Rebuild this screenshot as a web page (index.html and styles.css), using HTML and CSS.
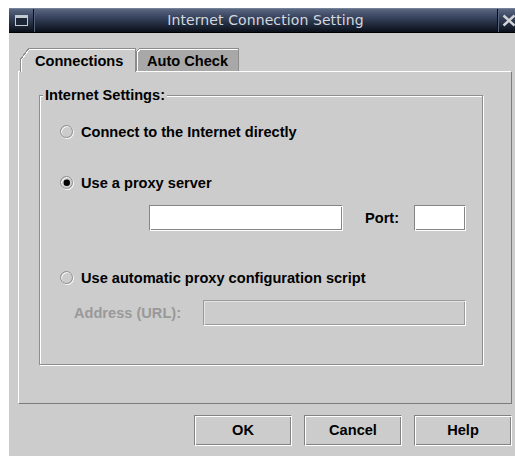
FILE: index.html
```html
<!DOCTYPE html>
<html lang="en">
<head>
<meta charset="utf-8">
<title>Internet Connection Setting</title>
<link rel="stylesheet" href="styles.css">
</head>
<body>
<div class="window">
  <div class="titlebar">
    <div class="tb-menu">
      <svg width="13" height="11" viewBox="0 0 13 11" aria-hidden="true">
        <rect x="0.5" y="0.5" width="12" height="10" fill="#1c2536" stroke="#c3c9d3"/>
        <rect x="1" y="1" width="11" height="2" fill="#c3c9d3"/>
      </svg>
    </div>
    <div class="tb-title">Internet Connection Setting</div>
    <div class="tb-close">
      <svg width="14" height="13" viewBox="0 0 14 13" aria-hidden="true">
        <path d="M1.5 1.5 L12.5 11.5 M12.5 1.5 L1.5 11.5" stroke="#d2d4d8" stroke-width="2.4" fill="none"/>
      </svg>
    </div>
  </div>

  <div class="dialog">
    <div class="tabstrip">
      <div class="tab tab-active">Connections</div>
      <div class="tab tab-idle">Auto Check</div>
    </div>
    <div class="tabpanel">
      <div class="group">
        <div class="group-title">Internet Settings:</div>

        <label class="option opt-direct">
          <svg class="radio" width="14" height="14" viewBox="0 0 14 14" aria-hidden="true">
            <circle cx="7.5" cy="7.5" r="6" fill="none" stroke="#ffffff"/>
            <circle cx="6.5" cy="6.5" r="6" fill="none" stroke="#8e8e8e"/>
          </svg>
          <span>Connect to the Internet directly</span>
        </label>

        <label class="option opt-proxy">
          <svg class="radio" width="14" height="14" viewBox="0 0 14 14" aria-hidden="true">
            <circle cx="7.5" cy="7.5" r="6" fill="none" stroke="#ffffff"/>
            <circle cx="6.5" cy="6.5" r="6" fill="none" stroke="#8e8e8e"/>
            <circle cx="6.8" cy="6.8" r="3.2" fill="#000"/>
          </svg>
          <span>Use a proxy server</span>
        </label>

        <div class="proxy-row">
          <input class="field host" type="text" aria-label="Proxy host">
          <span class="port-label">Port:</span>
          <input class="field port" type="text" aria-label="Port">
        </div>

        <label class="option opt-auto">
          <svg class="radio" width="14" height="14" viewBox="0 0 14 14" aria-hidden="true">
            <circle cx="7.5" cy="7.5" r="6" fill="none" stroke="#ffffff"/>
            <circle cx="6.5" cy="6.5" r="6" fill="none" stroke="#8e8e8e"/>
          </svg>
          <span>Use automatic proxy configuration script</span>
        </label>

        <div class="address-row">
          <span class="address-label">Address (URL):</span>
          <input class="field address" type="text" disabled aria-label="Address (URL)">
        </div>
      </div>
    </div>

    <div class="buttons">
      <button class="btn" type="button">OK</button>
      <button class="btn" type="button">Cancel</button>
      <button class="btn" type="button">Help</button>
    </div>
  </div>
</div>
</body>
</html>
```
FILE: styles.css
```css
* {
  box-sizing: border-box;
}

html,
body {
  margin: 0;
  padding: 0;
  background: #ffffff;
}

body {
  font-family: "Liberation Sans", Arial, Helvetica, sans-serif;
  font-weight: bold;
  font-size: 14.6px;
  color: #000;
}

/* ---------- window frame ---------- */

.window {
  margin: 8px 0 0 9px;
  width: 506px;
  height: 448px;
  background: #cccccc;
  overflow: hidden;
  display: flex;
  flex-direction: column;
}

.titlebar {
  flex: none;
  height: 25px;
  display: flex;
  background: linear-gradient(#5a6781 0%, #3d4964 30%, #1f283a 70%, #0b1019 100%);
  border-top: 1px solid #75829a;
  border-bottom: 1px solid #000;
}

.tb-menu {
  flex: none;
  width: 25px;
  display: flex;
  align-items: center;
  justify-content: center;
  border-right: 1px solid #0a0e16;
  box-shadow: 1px 0 0 #56627a;
}

.tb-title {
  flex: 1;
  text-align: center;
  font-family: "DejaVu Sans", sans-serif;
  font-weight: normal;
  font-size: 14px;
  letter-spacing: 0.1px;
  line-height: 23px;
  color: #d3d7df;
}

.tb-close {
  flex: none;
  width: 18px;
  display: flex;
  align-items: center;
  padding-left: 4px;
  border-left: 1px solid #0a0e16;
  box-shadow: inset 1px 0 0 #56627a;
  overflow: hidden;
}

.tb-close svg {
  flex: none;
}

/* ---------- dialog body ---------- */

.dialog {
  flex: 1;
  padding: 15px 3px 0 9px;
}

.tabstrip {
  display: flex;
  align-items: flex-start;
  height: 23px;
  padding-left: 2px;
}

.tab {
  position: relative;
  height: 23px;
  padding-top: 1px;
  line-height: 22px;
  border: 1px solid #8c8c8c;
  border-bottom: 0;
  box-shadow: inset 1px 1px 0 #ffffff;
  white-space: nowrap;
}

/* slanted top-left corner of a tab */
.tab::before {
  content: "";
  position: absolute;
  top: -1px;
  left: -1px;
  background: linear-gradient(to bottom right,
      #cccccc 0 calc(50% - 0.6px),
      #8c8c8c calc(50% - 0.6px) calc(50% + 0.6px),
      #ffffff calc(50% + 0.6px) calc(50% + 1.6px),
      transparent calc(50% + 1.6px));
}

.tab-active {
  z-index: 1;
  width: 116px;
  height: 24px;
  padding-left: 14px;
  background: #cccccc;
}

.tab-active::before {
  width: 9px;
  height: 12px;
}

.tab-idle {
  width: 103px;
  padding-left: 10px;
  background: #a8a8a8;
}

.tab-idle::before {
  width: 4px;
  height: 4px;
}

.tabpanel {
  height: 333px;
  border-top: 1px solid #ffffff;
  border-left: 1px solid #ffffff;
  border-right: 1px solid #7c7c7c;
  border-bottom: 1px solid #7c7c7c;
  padding-top: 23px;
}

/* ---------- titled, etched group ---------- */

.group {
  height: 270px;
  margin: 0 28px 0 20px;
  border: 1px solid #8e8e8e;
  box-shadow: inset 1px 1px 0 #ffffff, 1px 1px 0 #ffffff;
}

.group-title {
  width: max-content;
  margin: -9px 0 0 3px;
  padding: 0 2px;
  line-height: 17px;
  background: #cccccc;
}

.option {
  display: flex;
  align-items: center;
  height: 20px;
  padding-left: 20px;
  white-space: nowrap;
}

.option .radio {
  flex: none;
  margin-right: 7px;
}

.opt-direct {
  margin-top: 18px;
}

.opt-proxy {
  margin-top: 31px;
}

.opt-auto {
  margin-top: 37px;
}

/* ---------- text fields ---------- */

.field {
  display: block;
  flex: none;
  height: 26px;
  margin: 0;
  padding: 0 3px;
  font: inherit;
  font-weight: normal;
  background: #ffffff;
  border: 1px solid;
  border-color: #858585 #ffffff #ffffff #858585;
  box-shadow: inset 1px 1px 0 #ffffff, inset -1px -1px 0 #858585;
  border-radius: 0;
  outline: none;
  appearance: none;
}

.field:disabled {
  background: #cccccc;
  border-color: #9a9a9a #ffffff #ffffff #9a9a9a;
  box-shadow: inset 1px 1px 0 #e4e4e4, inset -1px -1px 0 #9a9a9a;
}

.proxy-row {
  display: flex;
  align-items: center;
  margin-top: 12px;
  padding-left: 109px;
}

.host {
  width: 194px;
}

.port-label {
  margin-left: 22px;
  width: 49px;
}

.port {
  width: 52px;
}

.address-row {
  display: flex;
  align-items: center;
  margin-top: 12px;
  padding-left: 34px;
}

.address-label {
  width: 129px;
  color: #999999;
  white-space: nowrap;
}

.address {
  width: 263px;
}

/* ---------- command buttons ---------- */

.buttons {
  display: flex;
  justify-content: flex-end;
  gap: 12px;
  margin-top: 11px;
}

.btn {
  width: 98px;
  height: 31px;
  margin: 0;
  padding: 0 0 1px;
  font: inherit;
  color: #000;
  background: #cccccc;
  border: 1px solid;
  border-color: #828282 #ffffff #ffffff #828282;
  box-shadow: inset 1px 1px 0 #ffffff, inset -1px -1px 0 #828282;
  border-radius: 0;
}
```
